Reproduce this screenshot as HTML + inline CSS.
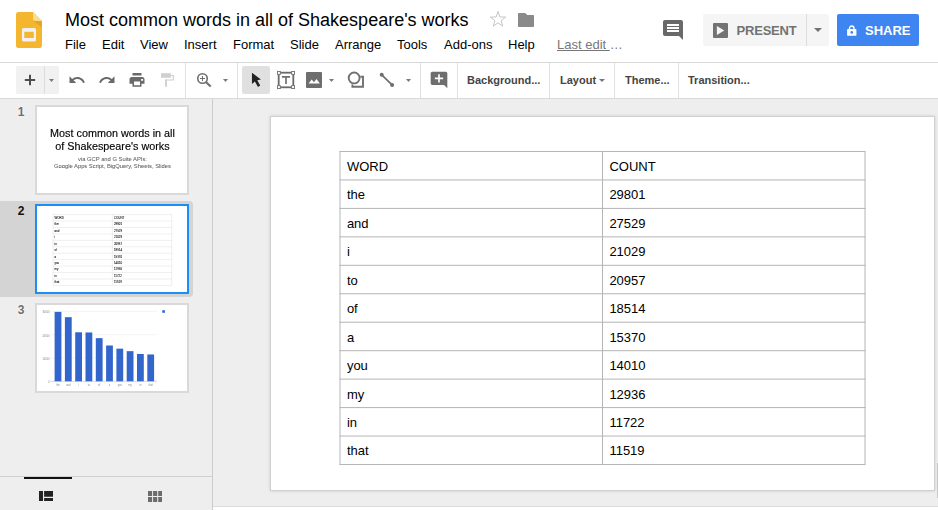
<!DOCTYPE html>
<html lang="en">
<head>
<meta charset="utf-8">
<title>Most common words in all of Shakespeare's works</title>
<style>
html,body{margin:0;padding:0;}
body{width:938px;height:510px;overflow:hidden;background:#fff;font-family:"Liberation Sans",Arial,sans-serif;color:#000;position:relative;}
.abs{position:absolute;}
svg{display:block;}
/* header */
#header{position:absolute;left:0;top:0;width:938px;height:62px;background:#fff;border-bottom:1px solid #d9d9d9;}
#title{position:absolute;left:65px;top:9px;font-size:18px;line-height:22px;white-space:nowrap;color:#000;}
.menu{position:absolute;top:37px;font-size:13px;line-height:16px;white-space:nowrap;color:#000;}
#lastedit{color:#777;}
#lastedit u{text-decoration:underline;}
#present{position:absolute;left:703px;top:14px;width:126px;height:32px;background:#f5f5f5;border-radius:2px;}
#present .div{position:absolute;left:103px;top:0;width:1px;height:32px;background:#dcdcdc;}
#present .lbl{position:absolute;left:33.500px;top:9px;font-size:13px;line-height:16px;font-weight:bold;color:#737373;letter-spacing:-0.2px;}
#share{position:absolute;left:837px;top:14px;width:82px;height:32px;background:#3f85f2;border-radius:2px;}
#share .lbl{position:absolute;left:28px;top:9px;font-size:13px;line-height:16px;font-weight:bold;color:#fff;}
/* toolbar */
#toolbar{position:absolute;left:0;top:63px;width:938px;height:35px;background:#fff;border-bottom:1px solid #d9d9d9;}
.sep{position:absolute;top:0;width:1px;height:35px;background:#e0e0e0;}
.tbtxt{position:absolute;top:11px;font-size:11px;line-height:13px;font-weight:bold;color:#444;white-space:nowrap;}
.dd{position:absolute;width:0;height:0;border-left:3.5px solid transparent;border-right:3.5px solid transparent;border-top:4px solid #777;}
.da{position:absolute;width:5px;height:3px;}
/* filmstrip */
#film{position:absolute;left:0;top:99px;width:212px;height:411px;background:#eee;border-right:1px solid #ccc;}
#work{position:absolute;left:213px;top:99px;width:725px;height:408px;background:#eee;}
.num{position:absolute;left:14px;width:14px;text-align:center;font-size:12px;line-height:12px;font-weight:bold;color:#6e6e6e;text-shadow:0 0 2px #fff,0 0 1px #fff;}
.thumb svg{filter:grayscale(1);}
#t3 svg{filter:none;}
#t3 svg g[font-size]{filter:grayscale(1);}
.thumb{position:absolute;left:35px;width:150px;height:86px;background:#fff;border:2px solid #d9d9d9;}
#sel{position:absolute;left:0;top:102px;width:193px;height:96px;background:#d4d4d4;border-radius:0 4px 4px 0;}
/* slide */
#slide{position:absolute;left:270px;top:116px;width:664px;height:374px;background:#fff;border:1px solid #d0d0d0;box-sizing:content-box;box-shadow:0 0 3px rgba(0,0,0,0.14);}
#slide{left:270px;top:116px;width:663px;height:373px;}
table{position:absolute;left:69px;top:34px;border-collapse:collapse;font-size:13px;color:#000;}
td{border:1px solid #b7b7b7;height:27.5px;padding:0 0 0 6px;box-sizing:border-box;vertical-align:middle;}
</style>
</head>
<body>
<div id="header">
  <svg class="abs" style="left:16px;top:12px" width="26" height="36" viewBox="0 0 26 36">
    <path d="M2.5 0H17l9 9v24.5a2.5 2.5 0 0 1-2.500 2.500h-21A2.500 2.500 0 0 1 0 33.500v-31A2.500 2.500 0 0 1 2.500 0z" fill="#f4b62f"/>
    <path d="M17 0l9 9h-6.500A2.500 2.500 0 0 1 17 6.500z" fill="#fbdc8c"/>
    <path d="M17.500 9H26v6.500z" fill="#d99a1a" opacity="0.6"/>
    <rect x="6" y="16" width="14" height="13.500" rx="1.500" fill="#f1f1f1"/>
    <rect x="8.300" y="19.800" width="9.500" height="6.200" fill="#f4b62f"/>
  </svg>
  <div id="title">Most common words in all of Shakespeare's works</div>
  <svg class="abs" style="left:489px;top:10px" width="18" height="18" viewBox="0 0 18 18"><path fill="none" stroke="#c6c6c6" stroke-width="1" stroke-linejoin="miter" d="M9.00 1.50L10.90 6.98L16.70 7.10L12.08 10.60L13.76 16.15L9.00 12.84L4.24 16.15L5.92 10.60L1.30 7.10L7.10 6.98z"/></svg>
  <svg class="abs" style="left:518px;top:13px" width="16" height="14" viewBox="0 0 16 14"><path fill="#8a8a8a" d="M.700 0H7.200L9.200 2h6.100a.700 .700 0 0 1 .700 .700V13.300a.700 .700 0 0 1-.700 .700H.700a.700 .700 0 0 1-.700-.700V.700A.700 .700 0 0 1 .700 0z"/></svg>
  <div class="menu" style="left:65px">File</div>
  <div class="menu" style="left:102px">Edit</div>
  <div class="menu" style="left:140px">View</div>
  <div class="menu" style="left:184px">Insert</div>
  <div class="menu" style="left:233px">Format</div>
  <div class="menu" style="left:290px">Slide</div>
  <div class="menu" style="left:335px">Arrange</div>
  <div class="menu" style="left:397px">Tools</div>
  <div class="menu" style="left:444px">Add-ons</div>
  <div class="menu" style="left:508px">Help</div>
  <div class="menu" id="lastedit" style="left:557px"><u>Last edit </u>…</div>
  <svg class="abs" style="left:661px;top:18px" width="24" height="24" viewBox="0 0 24 24"><path fill="#696969" d="M21.990 4c0-1.100-.890-2-1.990-2H4c-1.100 0-2 .900-2 2v12c0 1.100.900 2 2 2h14l4 4-.010-18zM18 14H6v-2h12v2zm0-3H6V9h12v2zm0-3H6V6h12v2z"/></svg>
  <div id="present">
    <svg class="abs" style="left:10px;top:9px" width="15" height="15" viewBox="0 0 15 15"><rect width="15" height="15" rx="1" fill="#737373"/><path d="M3.900 2.900v9.200l7.400-4.600z" fill="#f5f5f5"/></svg>
    <div class="lbl">PRESENT</div>
    <div class="div"></div>
    <div class="dd" style="left:111px;top:14px;border-top-color:#737373;border-left-width:4px;border-right-width:4px"></div>
  </div>
  <div id="share">
    <svg class="abs" style="left:9.500px;top:11px" width="10" height="11" viewBox="0 0 10 11"><path d="M2.500 4.500V3.300a2.250 2.250 0 0 1 4.500 0V4.500" fill="none" stroke="#fff" stroke-width="1.400"/><rect x="0.100" y="3.900" width="9.300" height="6.900" rx="0.900" fill="#fff"/><circle cx="4.750" cy="7.400" r="1.300" fill="#3f85f2"/></svg>
    <div class="lbl">SHARE</div>
  </div>
</div>

<div id="toolbar">
  <div class="abs" style="left:16px;top:3px;width:43px;height:28px;background:#f1f1f1;border-radius:2px"></div>
  <div class="abs" style="left:44px;top:3px;width:1px;height:28px;background:#dcdcdc"></div>
  <svg class="abs" style="left:24px;top:11px" width="12" height="12" viewBox="0 0 12 12"><path fill="#4d4d4d" d="M5 .800h2V5h4.200v2H7v4.200H5V7H.800V5H5z"/></svg>
  <svg class="da" style="left:49.0px;top:16px" viewBox="0 0 5 3"><path d="M0 0h5L2.500 3z" fill="#7a7a7a"/></svg>
  <svg class="abs" style="left:68px;top:8px" width="18" height="18" viewBox="0 0 24 24"><path fill="#6a6a6a" d="M12.500 8c-2.650 0-5.050.990-6.900 2.600L2 7v9h9l-3.620-3.620c1.390-1.160 3.160-1.880 5.120-1.880 3.540 0 6.550 2.310 7.600 5.500l2.370-.780C21.080 11.030 17.150 8 12.500 8z"/></svg>
  <svg class="abs" style="left:98px;top:8px" width="18" height="18" viewBox="0 0 24 24"><path fill="#6a6a6a" d="M18.400 10.600C16.550 8.990 14.150 8 11.500 8c-4.650 0-8.580 3.030-9.960 7.220L3.900 16c1.050-3.190 4.050-5.500 7.600-5.500 1.950 0 3.730.720 5.120 1.880L13 16h9V7l-3.600 3.600z"/></svg>
  <svg class="abs" style="left:128px;top:8px" width="18" height="18" viewBox="0 0 24 24"><path fill="#6a6a6a" fill-rule="evenodd" d="M19 8H5c-1.660 0-3 1.340-3 3v6h4v4h12v-4h4v-6c0-1.660-1.340-3-3-3zm-3 11H8v-5h8v5zM17.500 10.500h2.600v2.600h-2.600zM18 2.800H6v3.300h12V2.800z"/></svg>
  <svg class="abs" style="left:158px;top:8px" width="18" height="18" viewBox="0 0 18 18"><rect x="3" y="2.200" width="9.900" height="4.600" fill="#d0d0d0"/><path d="M12.900 4.500h2.400V9H8.050" fill="none" stroke="#d0d0d0" stroke-width="1.200"/><rect x="7.100" y="8.400" width="1.900" height="7.300" fill="#d0d0d0"/></svg>
  <div class="sep" style="left:185px"></div>
  <svg class="abs" style="left:195px;top:8px" width="18" height="18" viewBox="0 0 18 18"><circle cx="7.500" cy="7.500" r="4.750" fill="none" stroke="#6e6e6e" stroke-width="1.600"/><path d="M5 7.500h5M7.500 5v5" stroke="#6e6e6e" stroke-width="1" fill="none"/><path d="M10.900 10.900L15.700 15.600" stroke="#6e6e6e" stroke-width="2.100" fill="none"/></svg>
  <svg class="da" style="left:222.9px;top:16px" viewBox="0 0 5 3"><path d="M0 0h5L2.500 3z" fill="#7a7a7a"/></svg>
  <div class="sep" style="left:237px"></div>
  <div class="abs" style="left:242px;top:3px;width:28px;height:28px;background:#e0e0e0;border-radius:2px"></div>
  <svg class="abs" style="left:248px;top:8px" width="18" height="18" viewBox="0 0 18 18"><path fill="#222" d="M3.960 1.700V13l2.900-2.500L10 15.900l2.200-1.400L9.300 9.200l3.600-.800z"/></svg>
  <svg class="abs" style="left:277px;top:8px" width="18" height="18" viewBox="0 0 18 18"><rect x="1.700" y="1.700" width="14.600" height="14.600" fill="none" stroke="#6a6a6a" stroke-width="1.800"/><g fill="#fff" stroke="#707070" stroke-width="0.900"><rect x="0.450" y="0.450" width="2.900" height="2.900"/><rect x="14.650" y="0.450" width="2.900" height="2.900"/><rect x="0.450" y="14.650" width="2.900" height="2.900"/><rect x="14.650" y="14.650" width="2.900" height="2.900"/></g><path d="M4.900 5h8.200v1.700H9.850v6.400h-1.700V6.700H4.900z" fill="#707070"/></svg>
  <svg class="abs" style="left:306px;top:9px" width="16" height="16" viewBox="0 0 16 16"><rect width="16" height="16" rx="1" fill="#6e6e6e"/><path d="M2.500 11.500l3.200-4 2.300 2.800 2.500-3.300 3.300 4.500z" fill="#fff"/></svg>
  <svg class="da" style="left:328.8px;top:16px" viewBox="0 0 5 3"><path d="M0 0h5L2.500 3z" fill="#7a7a7a"/></svg>
  <svg class="abs" style="left:346px;top:8px" width="20" height="20" viewBox="0 0 20 20"><circle cx="8.150" cy="6.950" r="5.450" fill="none" stroke="#707070" stroke-width="1.900"/><path d="M14.400 5.800h2.600v9.900H6.400v-2.300" fill="none" stroke="#707070" stroke-width="1.900"/></svg>
  <svg class="abs" style="left:378px;top:8px" width="18" height="18" viewBox="0 0 18 18"><path d="M3.700 3.800L14.100 13.900" stroke="#6e6e6e" stroke-width="1.700"/><circle cx="3.700" cy="3.800" r="2" fill="#6e6e6e"/><circle cx="14.100" cy="13.900" r="2" fill="#6e6e6e"/></svg>
  <svg class="da" style="left:405.8px;top:16px" viewBox="0 0 5 3"><path d="M0 0h5L2.500 3z" fill="#7a7a7a"/></svg>
  <div class="sep" style="left:420px"></div>
  <svg class="abs" style="left:429px;top:7px" width="20" height="20" viewBox="0 0 24 24"><path fill="#6e6e6e" d="M21.990 4c0-1.100-.890-2-1.990-2H4c-1.100 0-2 .900-2 2v12c0 1.100.900 2 2 2h14l4 4-.010-18zM17 11h-4v4h-2v-4H7V9h4V5h2v4h4v2z"/></svg>
  <div class="sep" style="left:457px"></div>
  <div class="tbtxt" style="left:467px">Background...</div>
  <div class="sep" style="left:549px"></div>
  <div class="tbtxt" style="left:560px">Layout</div>
  <div class="dd" style="left:599px;top:16px;border-left-width:3px;border-right-width:3px;border-top-width:3px"></div>
  <div class="sep" style="left:614px"></div>
  <div class="tbtxt" style="left:625px">Theme...</div>
  <div class="sep" style="left:678px"></div>
  <div class="tbtxt" style="left:688px">Transition...</div>
</div>

<div id="film">
  <div id="sel"></div>
  <div class="num" style="top:7px">1</div>
  <div class="num" style="top:106px;color:#111;text-shadow:none">2</div>
  <div class="num" style="top:205px">3</div>
  <div class="thumb" id="t1" style="top:6px"><svg class="abs" style="left:0;top:0" width="150" height="86" viewBox="0 0 150 86" font-family="Liberation Sans, Arial, sans-serif" text-anchor="middle">
<text x="75.5" y="30.2" font-size="10.8" fill="#000" stroke="#000" stroke-width="0.15">Most common words in all</text>
<text x="75.5" y="42.9" font-size="10.8" fill="#000" stroke="#000" stroke-width="0.15">of Shakespeare's works</text>
<text x="75.5" y="53.7" font-size="5.8" fill="#626262" stroke="#626262" stroke-width="0.06">via GCP and G Suite APIs:</text>
<text x="75.5" y="60.7" font-size="5.8" fill="#626262" stroke="#626262" stroke-width="0.06">Google Apps Script, BigQuery, Sheets, Slides</text>
</svg></div>
  <div class="thumb" id="t2" style="top:105px;border-color:#1c8ef2"><svg class="abs" style="left:0;top:0" width="150" height="86" viewBox="-1.8 0 663 373">
<g stroke="#b5b5b5" stroke-width="1" fill="none">
<path d="M68.50 34.50H594.50"/>
<path d="M68.50 62.95H594.50"/>
<path d="M68.50 91.41H594.50"/>
<path d="M68.50 119.86H594.50"/>
<path d="M68.50 148.32H594.50"/>
<path d="M68.50 176.77H594.50"/>
<path d="M68.50 205.23H594.50"/>
<path d="M68.50 233.68H594.50"/>
<path d="M68.50 262.14H594.50"/>
<path d="M68.50 290.59H594.50"/>
<path d="M68.50 319.05H594.50"/>
<path d="M68.50 347.50H594.50"/>
<path d="M69.00 34.50V347.50"/>
<path d="M331.50 34.50V347.50"/>
<path d="M594.00 34.50V347.50"/>
</g>
<g font-family="Liberation Sans, Arial, sans-serif" font-size="13" fill="#000" stroke="#000" stroke-width="0.25">
<text x="75.6" y="53.90">WORD</text><text x="338.1" y="53.90">COUNT</text>
<text x="75.6" y="82.35">the</text><text x="338.1" y="82.35">29801</text>
<text x="75.6" y="110.81">and</text><text x="338.1" y="110.81">27529</text>
<text x="75.6" y="139.26">i</text><text x="338.1" y="139.26">21029</text>
<text x="75.6" y="167.72">to</text><text x="338.1" y="167.72">20957</text>
<text x="75.6" y="196.17">of</text><text x="338.1" y="196.17">18514</text>
<text x="75.6" y="224.63">a</text><text x="338.1" y="224.63">15370</text>
<text x="75.6" y="253.08">you</text><text x="338.1" y="253.08">14010</text>
<text x="75.6" y="281.54">my</text><text x="338.1" y="281.54">12936</text>
<text x="75.6" y="309.99">in</text><text x="338.1" y="309.99">11722</text>
<text x="75.6" y="338.45">that</text><text x="338.1" y="338.45">11519</text>
</g>
</svg></div>
  <div class="thumb" id="t3" style="top:204px"><svg class="abs" style="left:0;top:0" width="150" height="86" viewBox="0 0 150 86" font-family="Liberation Sans, Arial, sans-serif">
<g stroke="#e2e2e2" stroke-width="0.4">
<path d="M13.5 6.40H120.1"/>
<path d="M13.5 29.70H120.1"/>
<path d="M13.5 53.00H120.1"/>
</g>
<path d="M13.5 76.30H120.1" stroke="#9a9a9a" stroke-width="0.4"/>
<g fill="#3366cc">
<rect x="17.60" y="6.86" width="6.8" height="69.44"/>
<rect x="27.90" y="12.16" width="6.8" height="64.14"/>
<rect x="38.20" y="27.30" width="6.8" height="49.00"/>
<rect x="48.50" y="27.47" width="6.8" height="48.83"/>
<rect x="58.80" y="33.16" width="6.8" height="43.14"/>
<rect x="69.10" y="40.49" width="6.8" height="35.81"/>
<rect x="79.40" y="43.66" width="6.8" height="32.64"/>
<rect x="89.70" y="46.16" width="6.8" height="30.14"/>
<rect x="100.00" y="48.99" width="6.8" height="27.31"/>
<rect x="110.30" y="49.46" width="6.8" height="26.84"/>
<rect x="125.3" y="5.2" width="2.6" height="2.6"/>
</g>
<g font-size="2.6" fill="#888" text-anchor="end">
<text x="12.6" y="8.30">30000</text>
<text x="12.6" y="31.60">20000</text>
<text x="12.6" y="54.90">10000</text>
<text x="12.6" y="78.20">0</text>
</g>
<g font-size="2.6" fill="#888" text-anchor="middle">
<text x="21.00" y="80.6">the</text>
<text x="31.30" y="80.6">and</text>
<text x="41.60" y="80.6">i</text>
<text x="51.90" y="80.6">to</text>
<text x="62.20" y="80.6">of</text>
<text x="72.50" y="80.6">a</text>
<text x="82.80" y="80.6">you</text>
<text x="93.10" y="80.6">my</text>
<text x="103.40" y="80.6">in</text>
<text x="113.70" y="80.6">that</text>
</g></svg></div>
  <div class="abs" style="left:0;top:377px;width:212px;height:1px;background:#d0d0d0"></div>
  <div class="abs" style="left:24px;top:378px;width:48px;height:2px;background:#111"></div>
  <svg class="abs" style="left:39px;top:392px" width="14.300" height="10.100" viewBox="0 0 14.300 10.100"><path fill="#222" d="M0 0h4v10.100H0zM5.100 0h9.200v5.750H5.100zM5.100 7.100h9.200v3H5.100z"/></svg>
  <svg class="abs" style="left:147.800px;top:392px" width="14.400" height="10.900" viewBox="0 0 14.400 10.900"><path fill="#6b6b6b" d="M0 0h4.100v4.900H0zM5.100 0h4.100v4.900H5.100zM10.200 0h4.100v4.900h-4.100zM0 6h4.100v4.900H0zM5.100 6h4.100v4.900H5.100zM10.200 6h4.100v4.900h-4.100z"/></svg>
</div>

<div id="work"></div>
<div class="abs" style="left:213px;top:506px;width:725px;height:1px;background:#dcdcdc"></div>
<div class="abs" style="left:937px;top:463px;width:1px;height:35px;background:#c8c8c8"></div>

<div id="slide">
  <svg class="abs" style="left:0;top:0" width="663" height="373" viewBox="0 0 663 373"><g id="slidecontent">
<g stroke="#b5b5b5" stroke-width="1" fill="none">
<path d="M68.50 34.50H594.50"/>
<path d="M68.50 62.95H594.50"/>
<path d="M68.50 91.41H594.50"/>
<path d="M68.50 119.86H594.50"/>
<path d="M68.50 148.32H594.50"/>
<path d="M68.50 176.77H594.50"/>
<path d="M68.50 205.23H594.50"/>
<path d="M68.50 233.68H594.50"/>
<path d="M68.50 262.14H594.50"/>
<path d="M68.50 290.59H594.50"/>
<path d="M68.50 319.05H594.50"/>
<path d="M68.50 347.50H594.50"/>
<path d="M69.00 34.50V347.50"/>
<path d="M331.50 34.50V347.50"/>
<path d="M594.00 34.50V347.50"/>
</g>
<g font-family="Liberation Sans, Arial, sans-serif" font-size="13" fill="#000">
<text x="75.9" y="53.90">WORD</text><text x="338.4" y="53.90">COUNT</text>
<text x="75.9" y="82.35">the</text><text x="338.4" y="82.35">29801</text>
<text x="75.9" y="110.81">and</text><text x="338.4" y="110.81">27529</text>
<text x="75.9" y="139.26">i</text><text x="338.4" y="139.26">21029</text>
<text x="75.9" y="167.72">to</text><text x="338.4" y="167.72">20957</text>
<text x="75.9" y="196.17">of</text><text x="338.4" y="196.17">18514</text>
<text x="75.9" y="224.63">a</text><text x="338.4" y="224.63">15370</text>
<text x="75.9" y="253.08">you</text><text x="338.4" y="253.08">14010</text>
<text x="75.9" y="281.54">my</text><text x="338.4" y="281.54">12936</text>
<text x="75.9" y="309.99">in</text><text x="338.4" y="309.99">11722</text>
<text x="75.9" y="338.45">that</text><text x="338.4" y="338.45">11519</text>
</g>
</g></svg>
</div>
</body>
</html>
